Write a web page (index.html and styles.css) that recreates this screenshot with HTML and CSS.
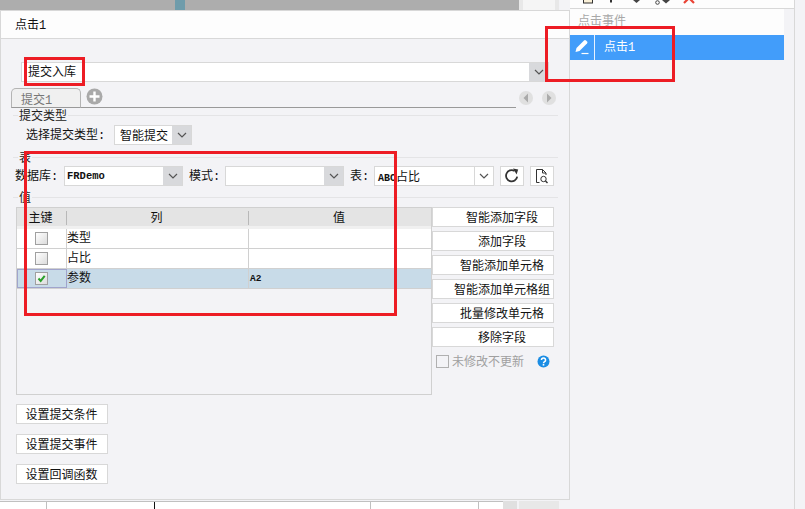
FILE: index.html
```html
<!DOCTYPE html>
<html lang="zh">
<head>
<meta charset="utf-8">
<title>点击1</title>
<link rel="stylesheet" href="styles.css">
</head>
<body>
<div class="app">
  <div class="left">
    <div class="strip">
      <div class="strip-a"></div><div class="strip-teal"></div><div class="strip-b"></div>
      <div class="strip-c"></div><div class="strip-d"></div><div class="strip-c2"></div><div class="strip-e"></div>
    </div>
    <div class="panel">
      <div class="panel-head">点击1</div>
      <div class="panel-body">
        <div class="main-combo">
          <span class="main-combo-text">提交入库</span>
          <span class="arrow arrow-gray"><svg width="10" height="6" viewBox="0 0 10 6"><path d="M1 1l4 4 4-4" fill="none" stroke="#555" stroke-width="1.2"/></svg></span>
        </div>
        <div class="tabs">
          <div class="tab">提交1</div>
          <svg class="tab-add" width="17" height="17" viewBox="0 0 17 17"><circle cx="8.5" cy="8.5" r="8" fill="#a9a9a9"/><path d="M8.5 3.5v10M3.5 8.5h10" stroke="#fff" stroke-width="2.4"/></svg>
          <div class="tab-line"></div>
          <div class="tab-nav">
            <svg width="14" height="14" viewBox="0 0 14 14"><circle cx="7" cy="7" r="7" fill="#e0e0e0"/><path d="M9 2.5v9L4.5 7z" fill="#aaa"/></svg>
            <svg width="14" height="14" viewBox="0 0 14 14"><circle cx="7" cy="7" r="7" fill="#e0e0e0"/><path d="M5 2.5v9L9.5 7z" fill="#aaa"/></svg>
          </div>
        </div>

        <div class="legend"><span>提交类型</span></div>
        <div class="form-row type-row">
          <span class="label">选择提交类型:</span>
          <div class="combo combo-type"><span class="combo-text">智能提交</span><span class="arrow arrow-gray"><svg width="10" height="6" viewBox="0 0 10 6"><path d="M1 1l4 4 4-4" fill="none" stroke="#555" stroke-width="1.2"/></svg></span></div>
        </div>

        <div class="legend legend-2"><span>表</span></div>
        <div class="form-row db-row">
          <span class="label label-db">数据库:</span>
          <div class="combo combo-db"><span class="combo-text combo-latin latin">FRDemo</span><span class="arrow arrow-gray"><svg width="10" height="6" viewBox="0 0 10 6"><path d="M1 1l4 4 4-4" fill="none" stroke="#555" stroke-width="1.2"/></svg></span></div>
          <span class="label label-mode">模式:</span>
          <div class="combo combo-db"><span class="combo-text"></span><span class="arrow arrow-gray"><svg width="10" height="6" viewBox="0 0 10 6"><path d="M1 1l4 4 4-4" fill="none" stroke="#555" stroke-width="1.2"/></svg></span></div>
          <span class="label label-table">表:</span>
          <div class="combo combo-table"><span class="combo-text combo-abc"><span class="abc">ABC</span>占比</span><span class="arrow arrow-line"><svg width="10" height="6" viewBox="0 0 10 6"><path d="M1 1l4 4 4-4" fill="none" stroke="#555" stroke-width="1.2"/></svg></span></div>
          <div class="icon-btn icon-btn-first"><svg width="16" height="16" viewBox="0 0 16 16"><path d="M13.2 8.6A5.6 5.6 0 1 1 10.6 3" fill="none" stroke="#333" stroke-width="1.8"/><path d="M9 .5l5.2 1-1.6 5z" fill="#333"/></svg></div>
          <div class="icon-btn"><svg width="16" height="16" viewBox="0 0 16 16"><path d="M5.5 14.5H2.5v-13h6l3.500 3.500v2M8.500 1.500V5H12" fill="none" stroke="#333"/><circle cx="9.500" cy="11" r="2.700" fill="none" stroke="#333"/><path d="M11.500 13l2 2" stroke="#333" stroke-width="1.400"/></svg></div>
        </div>

        <div class="legend legend-3"><span>值</span></div>
        <div class="values">
          <div class="table">
            <div class="t-head">
              <div class="th th-key">主键</div>
              <div class="th th-col">列</div>
              <div class="th th-val">值</div>
            </div>
            <div class="t-row">
              <div class="td td-key"><span class="check"></span></div>
              <div class="td td-col">类型</div>
              <div class="td td-val"></div>
            </div>
            <div class="t-row">
              <div class="td td-key"><span class="check"></span></div>
              <div class="td td-col">占比</div>
              <div class="td td-val"></div>
            </div>
            <div class="t-row t-row-on">
              <div class="td td-key"><span class="check"><svg width="11" height="11" viewBox="0 0 11 11"><path d="M2.500 5.500l2.200 2.400 4-5" fill="none" stroke="#2aa02a" stroke-width="2"/></svg></span></div>
              <div class="td td-col">参数</div>
              <div class="td td-val latin">A2</div>
            </div>
          </div>
          <div class="side">
            <div class="btn btn-side">智能添加字段</div>
            <div class="btn btn-side">添加字段</div>
            <div class="btn btn-side">智能添加单元格</div>
            <div class="btn btn-side">智能添加单元格组</div>
            <div class="btn btn-side">批量修改单元格</div>
            <div class="btn btn-side">移除字段</div>
            <div class="no-update">
              <span class="check-off"></span>
              <span class="no-update-text">未修改不更新</span>
              <svg class="help" width="13" height="13" viewBox="0 0 13 13"><circle cx="6.500" cy="6.500" r="6" fill="#1b8de4"/><path d="M4.400 5a2.100 2 0 1 1 3.200 1.700c-.8.500-1.100.8-1.100 1.600" fill="none" stroke="#fff" stroke-width="1.500"/><rect x="5.700" y="9" width="1.600" height="1.600" fill="#fff"/></svg>
            </div>
          </div>
        </div>
        <div class="bottom-btns">
          <div class="btn btn-low">设置提交条件</div>
          <div class="btn btn-low">设置提交事件</div>
          <div class="btn btn-low">设置回调函数</div>
        </div>
      </div>
    </div>
    <div class="sheet">
      <div class="cells">
        <div class="cell cell-1"></div><div class="cell cell-2"></div><div class="cell cell-3"></div><div class="cell cell-4"></div><div class="cell cell-5"></div>
      </div>
      <div class="sheet-c"></div><div class="sheet-d"></div>
    </div>
  </div>
  <div class="right">
    <div class="right-inner">
      <div class="toolbar">
        <svg width="224" height="8" viewBox="0 0 224 8">
          <rect x="13.500" y="-3" width="9" height="6" fill="#fbf1d8" stroke="#333"/>
          <path d="M41 0v2.500" stroke="#333" stroke-width="2"/>
          <path d="M63 0h7l-3.500 3z" fill="#444"/>
          <circle cx="87.500" cy="2.500" r="1.800" fill="none" stroke="#444"/>
          <path d="M92 0h8l-4 3.500z" fill="#444"/>
          <path d="M114 3l4-4M124 3l-4-4" fill="none" stroke="#ea4335" stroke-width="2.200"/>
        </svg>
      </div>
      <div class="events">
        <div class="events-title">点击事件</div>
        <div class="event">
          <div class="event-icon"><svg width="16" height="16" viewBox="0 0 16 16"><path d="M1.500 13l1-4 7.500-7.500q1-1 2 0l1 1q1 1 0 2L5.500 12z" fill="#fff"/><path d="M7.500 14.500h7" stroke="#fff" stroke-width="1.200"/></svg></div>
          <div class="event-name">点击1</div>
        </div>
      </div>
    </div>
  </div>
</div>
<div class="mark mark-a"></div>
<div class="mark mark-b"></div>
<div class="mark mark-c"></div>
</body>
</html>
```

FILE: styles.css
```css
* { box-sizing: border-box; }
html, body { margin: 0; padding: 0; }
body {
  position: relative;
  width: 805px;
  height: 509px;
  overflow: hidden;
  background: #f3f3f6;
  color: #111;
  font: 12px/16px "Liberation Mono", "Noto Sans CJK SC", sans-serif;
}
.app { display: flex; height: 509px; }
.left { width: 570px; display: flex; flex-direction: column; flex: none; }
.right { flex: 1; min-width: 0; }

.strip { display: flex; height: 10px; flex: none; }
.strip-a { width: 175px; background: #adadad; }
.strip-teal { width: 10px; background: #6f9cab; }
.strip-b { width: 334px; background: #adadad; }
.strip-c { width: 4px; background: #e8e8e8; }
.strip-d { width: 32px; background: #f5f5f5; }
.strip-c2 { width: 4px; background: #e8e8e8; }
.strip-e { flex: 1; background: #f3f3f6; }

.panel {
  height: 490px;
  flex: none;
  display: flex;
  flex-direction: column;
  border: 1px solid #d8d8d8;
}
.panel-head {
  height: 28px;
  flex: none;
  padding: 7px 0 0 14px;
  background: #fdfdfd;
  border-bottom: 1px solid #d8d8d8;
}
.panel-body { flex: 1; background: #f3f3f6; padding: 23px 0 0 0; }

.main-combo {
  display: flex;
  height: 20px;
  width: 528px;
  margin-left: 20px;
  background: #fff;
  border: 1px solid #d8d8d8;
}
.main-combo-text { flex: 1; padding-left: 6px; line-height: 20px; }
.arrow { display: flex; align-items: center; justify-content: center; width: 19px; flex: none; }
.arrow-gray { background: #d8d9dc; }
.arrow-line { border-left: 1px solid #d8d8d8; }

.tabs { display: flex; align-items: flex-start; height: 20px; margin: 6px 0 0 10px; }
.tab {
  width: 70px;
  height: 20px;
  flex: none;
  padding: 4px 0 0 9px;
  color: #777;
  background: #f0f0f0;
  border: 1px solid #b4b4b4;
  border-bottom-color: #999;
  border-radius: 5px 5px 0 0;
}
.tab-add { flex: none; margin: 0 0 0 5px; position: relative; }
.tab-line { width: 435px; height: 1px; margin-top: 19px; margin-left: -22px; background: #999; flex: none; }
.tab-nav { display: flex; gap: 9px; margin: 3px 0 0 3px; }

.legend {
  display: flex;
  align-items: center;
  height: 14px;
  width: 545px;
  margin-left: 12px;
  padding-left: 5px;
  line-height: 14px;
  color: #222;
  background: linear-gradient(#e4e4e6, #e4e4e6) 0 7px / 100% 1px no-repeat;
}
.legend span { background: #f3f3f6; padding: 2px 1px 0; height: 14px; }
.legend-2 { margin-top: 5px; }
.legend-3 { margin-top: 4px; }

.form-row { display: flex; align-items: center; height: 20px; }
.type-row { margin-top: 3px; padding-left: 25px; }
.db-row { margin-top: 2px; padding-left: 14px; }
.label { flex: none; white-space: nowrap; padding-top: 2px; }
.type-row .label { width: 88px; }
.label-db { width: 49px; }
.label-mode { width: 36px; margin-left: 6px; }
.label-table { width: 24px; margin-left: 6px; }

.combo { display: flex; height: 20px; flex: none; background: #fff; border: 1px solid #d8d8d8; }
.combo-text { flex: 1; min-width: 0; overflow: hidden; padding-left: 5px; white-space: nowrap; line-height: 22px; }
.combo-latin { padding-left: 2px; line-height: 19px; }
.combo-abc { padding-left: 3px; }
.abc { font-size: 10px; font-weight: bold; }
.combo-type { width: 78px; }
.combo-db { width: 119px; }
.combo-table { width: 120px; }
.latin { font-size: 10.5px; font-weight: bold; font-family: "Liberation Mono", monospace; }

.icon-btn {
  width: 24px;
  height: 20px;
  flex: none;
  display: flex;
  align-items: center;
  justify-content: center;
  margin-left: 6px;
  background: #fff;
  border: 1px solid #d8d8d8;
}

.values { display: flex; margin: 3px 0 0 15px; height: 188px; }
.table { width: 416px; flex: none; border: 1px solid #d0d0d0; }
.t-head { display: flex; height: 21px; background: #e4e4e4; border-bottom: 3px solid #f0f0f0; }
.th { text-align: center; position: relative; margin: 3px 0 1px; line-height: 16px; }
.th-key { width: 50px; padding-right: 2px; border-right: 1px solid #b8b8b8; }
.th-col { width: 182px; padding-right: 2px; border-right: 1px solid #b8b8b8; }
.th-val { flex: 1; padding-right: 2px; }
.t-row { display: flex; height: 20px; background: #fff; border-bottom: 1px solid #d0d0d0; }
.td { line-height: 20px; }
.td-key { width: 50px; display: flex; align-items: center; justify-content: center; border-right: 1px solid #d0d0d0; }
.td-col { width: 182px; border-right: 1px solid #d0d0d0; }
.td-val { flex: 1; padding-left: 1px; }
.t-row-on { background: #c8dbe8; }
.t-row-on .td-key { outline: 1px solid #a0a4cc; outline-offset: -1px; }
.td-val.latin { font-size: 9.5px; }
.check {
  display: flex;
  align-items: center;
  justify-content: center;
  width: 13px;
  height: 13px;
  border: 1px solid #a0a0a0;
  background: linear-gradient(135deg, #fff, #dcdcdc);
}

.side { width: 122px; flex: none; display: flex; flex-direction: column; gap: 4px; }
.btn { height: 20px; background: #fff; border: 1px solid #d8d8d8; text-align: center; line-height: 22px; white-space: nowrap; }
.btn-side { padding-left: 18px; }
.no-update { display: flex; align-items: center; margin-top: 2px; padding-left: 4px; height: 16px; }
.check-off { width: 13px; height: 13px; border: 1px solid #b0b0b0; flex: none; }
.no-update-text { margin-left: 3px; color: #a0a0a0; width: 76px; flex: none; padding-top: 4px; }
.help { margin-left: 9px; flex: none; }

.bottom-btns { display: flex; flex-direction: column; gap: 10px; width: 92px; margin: 9px 0 0 15px; }
.btn-low { flex: none; padding-right: 1px; }

.sheet { flex: 1; display: flex; align-items: stretch; padding-top: 1px; min-height: 0; }
.cells { display: flex; width: 503px; flex: none; background: #fff; border-top: 1px solid #c0c0c0; }
.cell { height: 100%; border-right: 1px solid #c0c0c0; flex: none; }
.cell-1 { width: 47px; }
.cell-2 { width: 108px; border-right-color: #111; }
.cell-3 { width: 216px; }
.cell-4 { width: 108px; }
.cell-5 { flex: 1; border-right: 0; }
.sheet-c { width: 14px; background: #e0e0e0; }
.sheet-d { width: 40px; margin-left: 2px; background: #e8e8e8; }

.right-inner { width: 225px; height: 509px; border-right: 1px solid #d8d8d8; }
.toolbar { height: 9px; background: #fdfdfd; border-bottom: 1px solid #d8d8d8; overflow: hidden; }
.toolbar svg { display: block; }
.events { width: 214px; }
.events-title { height: 26px; padding: 5px 0 0 8px; color: #a8a8a8; background: #fdfdfd; }
.event { display: flex; height: 25px; background: #429dfa; color: #fff; }
.event-icon { width: 25px; display: flex; align-items: center; justify-content: center; border-right: 1px solid #e8f2ff; padding-bottom: 1px; }
.event-name { padding-left: 9px; line-height: 26px; }

.mark { position: absolute; border: 3px solid #ed1c24; }
.mark-a { left: 24px; top: 57px; width: 61px; height: 29px; }
.mark-b { left: 24px; top: 151px; width: 373px; height: 165px; }
.mark-c { left: 545px; top: 26px; width: 130px; height: 56px; }
```
